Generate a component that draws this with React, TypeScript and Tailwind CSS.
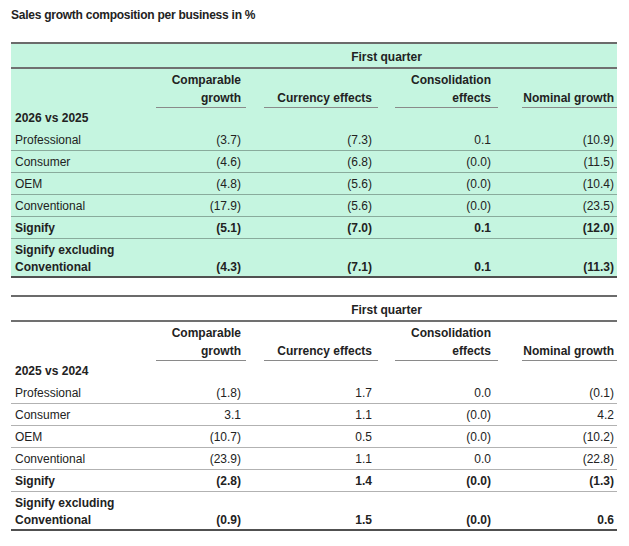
type Row = { label: string; values: string[]; bold?: boolean; twoLine?: boolean }

const pads = ['pl-0 pr-[5px]', 'pl-[18px] pr-[6px]', 'pl-[17px] pr-[7px]', 'pl-[24px] pr-[3px]']

function GrowthTable({ period, rows, mint }: { period: string; rows: Row[]; mint?: boolean }) {
  const heads = [['Comparable', 'growth'], ['', 'Currency effects'], ['Consolidation', 'effects'], ['', 'Nominal growth']]
  return (
    <div className={`${mint ? 'bg-[#c5f5e0]' : 'bg-white'} border-t-2 border-b-2 border-t-[#6b6b6b] border-b-[#505050]`}>
      <div className="grid grid-cols-[145px_90px_132px_120px_119px]">
        {/* row 1 */}
        <div className="border-b-2 border-[#707070]" />
        <div className="col-span-4 border-b-2 border-[#707070] pt-[5px] pb-[2px] text-center font-bold leading-[16px]">
          First quarter
        </div>

        {/* row 2 */}
        <div />
        {heads.map((h, i) => (
          <div key={i} className={pads[i].split(' ')[0]}>
            <div className={`border-b border-[#8a8a8a] pt-[2px] text-right font-bold leading-[18px] ${pads[i].split(' ')[1]}`}>
              <div>{h[0] || '\u00a0'}</div>
              <div>{h[1]}</div>
            </div>
          </div>
        ))}

        {/* period */}
        <div className="col-span-5 pl-[4px] font-bold leading-[21px]">{period}</div>

        {rows.map((r, ri) => {
          const last = ri === rows.length - 1
          const rowCls = last ? 'pt-[3px] leading-[17px]' : `pt-[2px] leading-[19px] border-b border-black/30`
          return (
            <div key={r.label} className={`contents ${r.bold ? 'font-bold' : ''}`}>
              <div className={`pl-[4px] ${rowCls}`}>
                {r.twoLine ? (
                  <>
                    <div>Signify excluding</div>
                    <div>Conventional</div>
                  </>
                ) : (
                  r.label
                )}
              </div>
              {r.values.map((v, i) => (
                <div key={i} className={`flex items-end justify-end text-right ${pads[i]} ${rowCls}`}>
                  {v}
                </div>
              ))}
            </div>
          )
        })}
      </div>
    </div>
  )
}

export default function App() {
  const t2026: Row[] = [
    { label: 'Professional', values: ['(3.7)', '(7.3)', '0.1', '(10.9)'] },
    { label: 'Consumer', values: ['(4.6)', '(6.8)', '(0.0)', '(11.5)'] },
    { label: 'OEM', values: ['(4.8)', '(5.6)', '(0.0)', '(10.4)'] },
    { label: 'Conventional', values: ['(17.9)', '(5.6)', '(0.0)', '(23.5)'] },
    { label: 'Signify', values: ['(5.1)', '(7.0)', '0.1', '(12.0)'], bold: true },
    { label: 'Signify excluding Conventional', values: ['(4.3)', '(7.1)', '0.1', '(11.3)'], bold: true, twoLine: true },
  ]
  const t2025: Row[] = [
    { label: 'Professional', values: ['(1.8)', '1.7', '0.0', '(0.1)'] },
    { label: 'Consumer', values: ['3.1', '1.1', '(0.0)', '4.2'] },
    { label: 'OEM', values: ['(10.7)', '0.5', '(0.0)', '(10.2)'] },
    { label: 'Conventional', values: ['(23.9)', '1.1', '0.0', '(22.8)'] },
    { label: 'Signify', values: ['(2.8)', '1.4', '(0.0)', '(1.3)'], bold: true },
    { label: 'Signify excluding Conventional', values: ['(0.9)', '1.5', '(0.0)', '0.6'], bold: true, twoLine: true },
  ]

  return (
    <div className="w-[629px] h-[546px] bg-white px-[11px] pt-[7px] text-[12px] text-[#222] font-['Liberation_Sans',Arial,sans-serif]">
      <h1 className="font-bold leading-[16px] tracking-[-0.25px]">Sales growth composition per business in %</h1>
      <div className="mt-[19px] w-[606px]">
        <GrowthTable period="2026 vs 2025" rows={t2026} mint />
      </div>
      <div className="mt-[17px] w-[606px]">
        <GrowthTable period="2025 vs 2024" rows={t2025} />
      </div>
    </div>
  )
}
